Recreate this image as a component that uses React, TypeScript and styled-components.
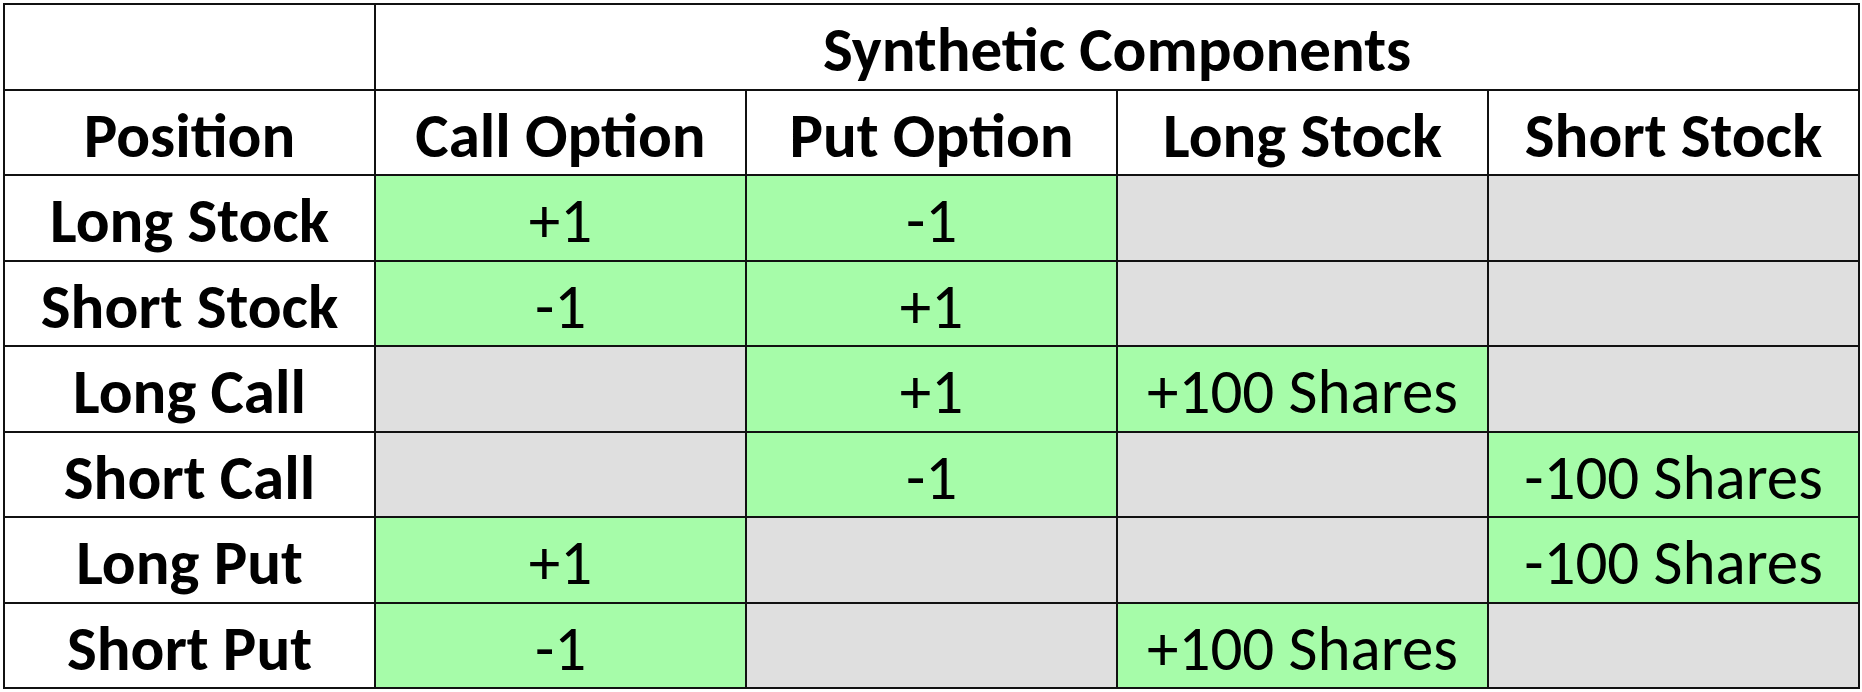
import styled, { createGlobalStyle } from 'styled-components'

const GlobalStyle = createGlobalStyle`
  html, body {
    margin: 0;
    padding: 0;
    background: #ffffff;
  }
  body {
    font-family: Carlito, Lato, "Liberation Sans", sans-serif;
    color: #000000;
  }
`

const Page = styled.div`
  padding: 3px 0 0 3px;
`

const Table = styled.table`
  border-collapse: collapse;
  table-layout: fixed;
  width: 1855px;
  border: 2px solid #000;
`

const HeadCell = styled.th`
  height: 77.5px;
  padding: 6px 0 0;
  border: 2px solid #111;
  background: #ffffff;
  font-size: 63px;
  line-height: 1;
  font-weight: 700;
  text-align: center;
  vertical-align: middle;
  white-space: nowrap;
`

const RowLabel = styled.th`
  height: 77.5px;
  padding: 6px 0 0;
  border: 2px solid #111;
  background: #ffffff;
  font-size: 63px;
  line-height: 1;
  font-weight: 700;
  text-align: center;
  vertical-align: middle;
  white-space: nowrap;
`

const Cell = styled.td<{ $filled: boolean }>`
  height: 77.5px;
  padding: 6px 0 0;
  border: 2px solid #111;
  background: ${({ $filled }) => ($filled ? '#a6fca9' : '#dfdfdf')};
  font-size: 63px;
  line-height: 1;
  font-weight: 400;
  text-align: center;
  vertical-align: middle;
  white-space: nowrap;
`

const columns = ['Call Option', 'Put Option', 'Long Stock', 'Short Stock']

const rows: { position: string; values: string[] }[] = [
  { position: 'Long Stock', values: ['+1', '-1', '', ''] },
  { position: 'Short Stock', values: ['-1', '+1', '', ''] },
  { position: 'Long Call', values: ['', '+1', '+100 Shares', ''] },
  { position: 'Short Call', values: ['', '-1', '', '-100 Shares'] },
  { position: 'Long Put', values: ['+1', '', '', '-100 Shares'] },
  { position: 'Short Put', values: ['-1', '', '+100 Shares', ''] },
]

const App = () => {
  return (
    <Page>
      <GlobalStyle />
      <Table>
        <colgroup>
          <col style={{ width: 371 }} />
          {columns.map(c => <col key={c} style={{ width: 371 }} />)}
        </colgroup>
        <thead>
          <tr>
            <HeadCell />
            <HeadCell colSpan={4}>Synthetic Components</HeadCell>
          </tr>
          <tr>
            <HeadCell>Position</HeadCell>
            {columns.map(c => <HeadCell key={c}>{c}</HeadCell>)}
          </tr>
        </thead>
        <tbody>
          {rows.map(row => (
            <tr key={row.position}>
              <RowLabel>{row.position}</RowLabel>
              {row.values.map((v, i) => (
                <Cell key={`${row.position}-${i}`} $filled={v !== ''}>{v}</Cell>
              ))}
            </tr>
          ))}
        </tbody>
      </Table>
    </Page>
  )
}

export default App
